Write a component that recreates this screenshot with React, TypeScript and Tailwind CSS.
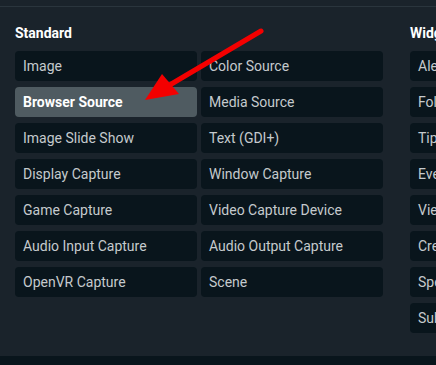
import React from "react";

const STANDARD = [
  "Image",
  "Color Source",
  "Browser Source",
  "Media Source",
  "Image Slide Show",
  "Text (GDI+)",
  "Display Capture",
  "Window Capture",
  "Game Capture",
  "Video Capture Device",
  "Audio Input Capture",
  "Audio Output Capture",
  "OpenVR Capture",
  "Scene",
];

const WIDGETS = [
  "Alert Box",
  "Follower Goal",
  "Tip Jar",
  "Event List",
  "Viewer Count",
  "Credits",
  "Spectrum",
  "Sub Goal",
];

function SourceButton({ label, active }: { label: string; active?: boolean }) {
  return (
    <button
      type="button"
      className={`flex h-[30px] w-[182px] shrink-0 items-center rounded-[4px] px-2 text-left text-[14px] ${
        active ? "bg-[#4f5b61] font-bold text-white" : "bg-[#09151c] text-[#c5cacd]"
      }`}
    >
      <span className="whitespace-nowrap">{label}</span>
    </button>
  );
}

export default function App() {
  return (
    <main className="relative flex h-[365px] w-[436px] flex-col overflow-hidden bg-[#1a232b] font-['Roboto',sans-serif]">
      <div className="h-[7px] shrink-0 border-b border-[#2a353d]" />
      <div className="flex flex-1 gap-[27px] pl-[15px] pt-[16px]">
        <section className="flex flex-col">
          <h2 className="mb-2 text-[14px] font-bold leading-[20px] text-white">Standard</h2>
          <div className="grid grid-cols-[182px_182px] gap-x-1 gap-y-[6px]">
            {STANDARD.map((s) => (
              <SourceButton key={s} label={s} active={s === "Browser Source"} />
            ))}
          </div>
        </section>
        <section className="flex flex-col">
          <h2 className="mb-2 whitespace-nowrap text-[14px] font-bold leading-[20px] text-white">Widgets</h2>
          <div className="flex flex-col gap-[6px]">
            {WIDGETS.map((w) => (
              <SourceButton key={w} label={w} />
            ))}
          </div>
        </section>
      </div>
      <div className="h-[9px] shrink-0 bg-[#09151c]" />

      {/* annotation arrow */}
      <svg className="pointer-events-none absolute left-0 top-0" width="436" height="365">
        <line x1="261" y1="31" x2="168" y2="86" stroke="#f40000" strokeWidth="5" strokeLinecap="round" />
        <polygon points="145,100 162,74 179,94" fill="#f40000" />
      </svg>
    </main>
  );
}
